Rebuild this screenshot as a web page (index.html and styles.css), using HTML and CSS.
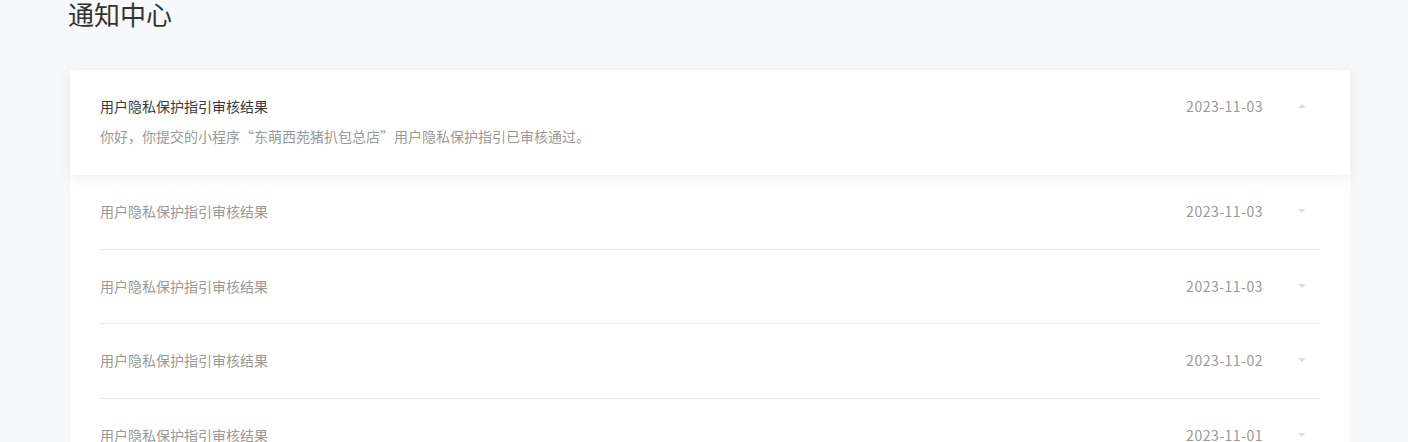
FILE: index.html
```html
<!DOCTYPE html>
<html lang="zh-CN">
<head>
<meta charset="utf-8">
<title>通知中心</title>
<link rel="stylesheet" href="styles.css">
</head>
<body>
<div class="page">
  <h1 class="page-title">通知中心</h1>
  <div class="list">
    <div class="item open">
      <div class="head">
        <span class="title">用户隐私保护指引审核结果</span>
        <span class="date">2023-11-03</span>
        <span class="arrow up"></span>
      </div>
      <div class="desc">你好，你提交的小程序“东萌西苑猪扒包总店”用户隐私保护指引已审核通过。</div>
    </div>
    <div class="item">
      <div class="head">
        <span class="title">用户隐私保护指引审核结果</span>
        <span class="date">2023-11-03</span>
        <span class="arrow down"></span>
      </div>
    </div>
    <div class="item">
      <div class="head">
        <span class="title">用户隐私保护指引审核结果</span>
        <span class="date">2023-11-03</span>
        <span class="arrow down"></span>
      </div>
    </div>
    <div class="item">
      <div class="head">
        <span class="title">用户隐私保护指引审核结果</span>
        <span class="date">2023-11-02</span>
        <span class="arrow down"></span>
      </div>
    </div>
    <div class="item">
      <div class="head">
        <span class="title">用户隐私保护指引审核结果</span>
        <span class="date">2023-11-01</span>
        <span class="arrow down"></span>
      </div>
    </div>
  </div>
</div>
</body>
</html>
```
FILE: styles.css
```css
html, body {
  margin: 0;
  padding: 0;
  background: #f7f8fa;
  font-family: "Noto Sans CJK SC", "Noto Sans", sans-serif;
}
.page {
  padding: 0 58px 0 70px;
}
.page-title {
  margin: 0 0 0 -2px;
  height: 70px;
  font-size: 26px;
  font-weight: 400;
  line-height: 28px;
  color: #333;
}
.list {
  background: #fff;
}
.item {
  padding: 0 30px;
}
.item .head {
  box-sizing: border-box;
  display: flex;
  align-items: center;
  height: 74.5px;
  padding-bottom: 1px;
  border-bottom: 1px solid #e8e9ec;
}
.item.open {
  padding: 25px 30px 28px;
  box-shadow: 0 2px 12px rgba(0, 0, 0, 0.08);
  position: relative;
}
.item.open .head {
  height: 22px;
  padding-bottom: 0;
  border-bottom: none;
}
.title {
  flex: 1;
  font-size: 14px;
  color: #999;
  line-height: 22px;
}
.item.open .title {
  color: #3a3a3a;
}
.date {
  font-size: 14px;
  letter-spacing: 0.5px;
  color: #999;
  line-height: 22px;
}
.arrow {
  width: 0;
  height: 0;
  margin-left: 35px;
  margin-right: 14px;
  border-left: 4px solid transparent;
  border-right: 4px solid transparent;
}
.arrow.up {
  border-bottom: 4px solid #dcdcdc;
}
.arrow.down {
  border-top: 4px solid #dcdcdc;
}
.desc {
  margin-top: 8px;
  font-size: 14px;
  line-height: 22px;
  color: #999;
}
```
